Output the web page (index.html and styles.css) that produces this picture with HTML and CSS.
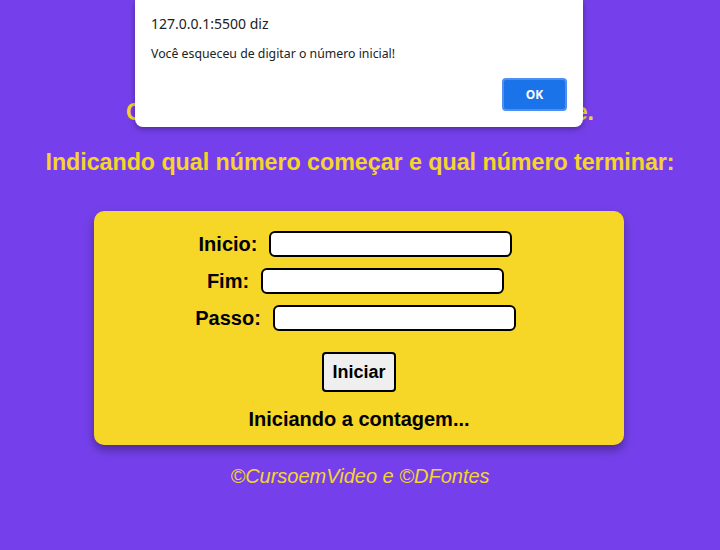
FILE: index.html
```html
<!DOCTYPE html>
<html lang="pt-BR">
<head>
<meta charset="utf-8">
<title>Contador</title>
<link rel="stylesheet" href="styles.css">
</head>
<body>
  <header class="intro">
    <p>Conte de forma crescente ou decrescente.</p>
    <p>Indicando qual número começar e qual número terminar:</p>
  </header>
  <main class="card">
    <div class="rows">
      <label class="row"><span>Inicio:</span><input type="text" class="field"></label>
      <label class="row"><span>Fim:</span><input type="text" class="field"></label>
      <label class="row"><span>Passo:</span><input type="text" class="field"></label>
    </div>
    <div class="actions"><button class="btn" type="button">Iniciar</button></div>
    <p class="result">Iniciando a contagem...</p>
  </main>
  <footer class="foot">©CursoemVideo e ©DFontes</footer>

  <div class="alert" role="alertdialog">
    <div class="alert-title">127.0.0.1:5500 diz</div>
    <div class="alert-msg">Você esqueceu de digitar o número inicial!</div>
    <div class="alert-actions"><button class="alert-ok" type="button">OK</button></div>
  </div>
</body>
</html>
```
FILE: styles.css
```css
html, body {
  margin: 0;
  padding: 0;
}
body {
  background: #7540eb;
  font-family: "Liberation Sans", Arial, sans-serif;
  min-height: 550px;
  position: relative;
}
.intro {
  padding-top: 98px;
  display: flex;
  flex-direction: column;
  gap: 22px;
  text-align: center;
}
.intro p {
  margin: 0;
  color: #f5d52c;
  font-weight: bold;
  font-size: 23.3px;
  line-height: 28px;
  letter-spacing: -0.05px;
}
.card {
  width: 530px;
  box-sizing: border-box;
  margin: 35px auto 0;
  position: relative;
  left: -1px;
  background: #f6d626;
  border-radius: 10px;
  padding: 20px 20px 14px;
  box-shadow: 0 5px 10px rgba(0, 0, 0, 0.35);
}
.rows {
  display: flex;
  flex-direction: column;
  gap: 11px;
  padding-right: 7px;
}
.row {
  display: flex;
  justify-content: center;
  align-items: center;
  gap: 12px;
  height: 26px;
  font-size: 20px;
  font-weight: bold;
  color: #000;
}
.field {
  width: 243px;
  height: 26px;
  box-sizing: border-box;
  border: 2px solid #000;
  border-radius: 6px;
  background: #fff;
  margin: 0;
  padding: 0 6px;
}
.actions {
  margin-top: 21px;
  display: flex;
  justify-content: center;
}
.btn {
  font-family: "Liberation Sans", Arial, sans-serif;
  font-size: 18px;
  font-weight: bold;
  color: #000;
  background: #efefef;
  border: 2px solid #000;
  border-radius: 4px;
  height: 40px;
  padding: 0 8px;
}
.result {
  margin: 16px 0 0;
  text-align: center;
  font-size: 20px;
  font-weight: bold;
  line-height: 23px;
  color: #000;
}
.foot {
  margin-top: 20px;
  text-align: center;
  font-style: italic;
  font-size: 20px;
  line-height: 23px;
  color: #f5d52c;
}
.alert {
  position: absolute;
  top: 0;
  left: 135px;
  width: 448px;
  box-sizing: border-box;
  height: 127px;
  background: #fff;
  border-radius: 0 0 8px 8px;
  box-shadow: 0 2px 6px rgba(0, 0, 0, 0.35);
  padding: 14px 16px 16px;
  font-family: "Noto Sans", "Open Sans", sans-serif;
  color: #202124;
}
.alert-title {
  font-size: 14px;
  line-height: 20px;
}
.alert-msg {
  margin-top: 11px;
  font-size: 12.3px;
  line-height: 17px;
}
.alert-actions {
  margin-top: 16px;
  display: flex;
  justify-content: flex-end;
}
.alert-ok {
  width: 65px;
  height: 33px;
  box-sizing: border-box;
  background: #1a73e8;
  border: 2px solid #4f8ff0;
  border-radius: 4px;
  color: #fff;
  font-family: "Noto Sans", "Open Sans", sans-serif;
  font-weight: bold;
  font-size: 12px;
  padding: 0;
}
```
